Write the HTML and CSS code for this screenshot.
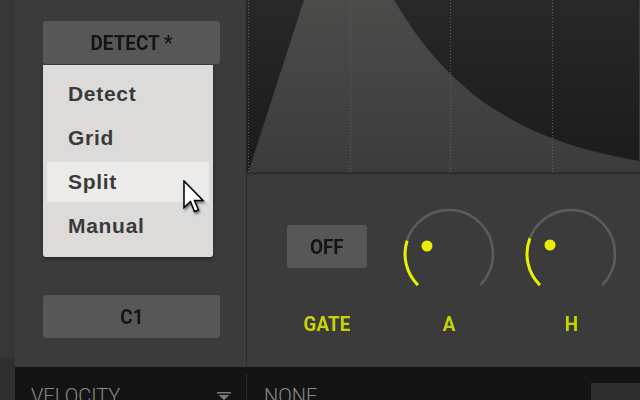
FILE: index.html
```html
<!DOCTYPE html>
<html>
<head>
    <title>Slice Editor</title>
    <link rel="stylesheet" href="styles.css">
</head>
<body>
    <div class="app">
        <div class="strip"></div>
        <div class="main">
            <div class="panel">
                <div class="left-col">
                    <div class="dropdown">
                        <button class="pad-btn"><span>DETECT *</span></button>
                        <ul class="menu">
                            <li>Detect</li>
                            <li>Grid</li>
                            <li class="active">Split</li>
                            <li>Manual</li>
                        </ul>
                    </div>
                    <button class="pad-btn"><span>C1</span></button>
                </div>
                <div class="right-col">
                    <div class="graph">
                        <svg width="392" height="172" viewBox="0 0 392 172">
                            <defs>
                                <linearGradient id="bg" x1="0" y1="0" x2="0" y2="1">
                                    <stop offset="0" stop-color="#282828"/>
                                    <stop offset="1" stop-color="#1b1b1b"/>
                                </linearGradient>
                                <linearGradient id="env" x1="0" y1="0" x2="0" y2="1">
                                    <stop offset="0" stop-color="#4b4b4a"/>
                                    <stop offset="1" stop-color="#3c3c3c"/>
                                </linearGradient>
                            </defs>
                            <rect width="392" height="172" fill="url(#bg)"/>
                            <path d="M2,170 L57,0 L147,0 L157,16 L167,31 L177,44.5 L187,56.4 L197,67.5 L207,77.5 L217,86.5 L227,95 L237,102.5 L247,109 L267,121 L287,131 L307,139 L327,146 L347,151.5 L367,156 L392,161 L392,172 L2,172 Z" fill="url(#env)"/>
                            <g stroke="#5e5e5e" stroke-width="1" stroke-dasharray="1 2">
                                <line x1="1.5" y1="0" x2="1.5" y2="172"/>
                                <line x1="103.5" y1="0" x2="103.5" y2="172"/>
                                <line x1="203.5" y1="0" x2="203.5" y2="172"/>
                                <line x1="305.5" y1="0" x2="305.5" y2="172"/>
                            </g>
                        </svg>
                    </div>
                    <div class="controls">
                        <div class="ctl">
                            <div class="ctl-top"><button class="pad-btn small"><span>OFF</span></button></div>
                            <span class="ctl-label">GATE</span>
                        </div>
                        <div class="ctl">
                            <div class="ctl-top">
                                <svg class="knob" width="100" height="100" viewBox="0 0 100 100">
                                    <path d="M18.9,81.1 A44 44 0 1 1 81.1,81.1" fill="none" stroke="#5c5c5c" stroke-width="2.5"/>
                                    <path d="M18.9,81.1 A44 44 0 0 1 8.1,36.7" fill="none" stroke="#e6f000" stroke-width="3"/>
                                    <circle cx="28" cy="42" r="5.5" fill="#e6f000"/>
                                </svg>
                            </div>
                            <span class="ctl-label">A</span>
                        </div>
                        <div class="ctl">
                            <div class="ctl-top">
                                <svg class="knob" width="100" height="100" viewBox="0 0 100 100">
                                    <path d="M18.9,81.1 A44 44 0 1 1 81.1,81.1" fill="none" stroke="#5c5c5c" stroke-width="2.5"/>
                                    <path d="M18.9,81.1 A44 44 0 0 1 8.9,34.2" fill="none" stroke="#e6f000" stroke-width="3"/>
                                    <circle cx="29" cy="41" r="5.5" fill="#e6f000"/>
                                </svg>
                            </div>
                            <span class="ctl-label">H</span>
                        </div>
                    </div>
                </div>
            </div>
            <div class="bottom">
                <div class="field first">
                    <span>VELOCITY</span>
                    <svg class="caret" width="14" height="8" viewBox="0 0 14 8">
                        <rect x="0" y="0" width="14" height="1.5" fill="#7c7c7c"/>
                        <path d="M1.5,3 L12.5,3 L7,8 Z" fill="#7c7c7c"/>
                    </svg>
                </div>
                <div class="field second">
                    <span>NONE</span>
                </div>
                <div class="corner-box"></div>
            </div>
        </div>
    </div>

    <!-- mouse pointer over the menu -->
    <svg class="pointer" width="24" height="36" viewBox="0 0 24 36">
        <path d="M1,1 L1,27.5 L7.5,21.5 L11.5,31.5 L15.5,30 L11.5,20.5 L20,20.5 Z" fill="#fff" stroke="#000" stroke-width="1.5" stroke-linejoin="miter"/>
    </svg>
</body>
</html>
```

FILE: styles.css
```css
body { margin: 0; background: #141414; overflow: hidden; }
.app { display: flex; width: 640px; height: 400px; }
.strip { width: 15px; background: #363636; border-bottom: 42px solid #2f2f2f; box-sizing: border-box; }
.main { flex: 1; display: flex; flex-direction: column; }
.panel { height: 367px; flex-shrink: 0; display: flex; background: #3b3b3b; background-image: repeating-conic-gradient(#3d3d3d 0 25%, #393939 0 50%); background-size: 2px 2px; }

.left-col { width: 232px; border-right: 1px solid #2c2c2c; padding: 21px 0 0 28px; box-sizing: border-box; display: flex; flex-direction: column; gap: 231px; }
.dropdown { position: relative; }
.pad-btn { display: block; width: 177px; height: 43px; border: 0; border-radius: 3px; background: #575757; color: #141414; font-family: Roboto, "Liberation Sans", sans-serif; font-weight: 700; font-size: 21px; padding: 0; }
.pad-btn span, .ctl-label { display: inline-block; transform: scaleX(0.9); }
.pad-btn.small { width: 80px; margin-top: 21px; }

.menu { position: absolute; left: 0; top: 44px; width: 170px; margin: 0; padding: 9px 4px 11px; box-sizing: border-box; list-style: none; background: #dcdbda; border-radius: 0 0 3px 3px; box-shadow: 0 2px 4px rgba(0,0,0,0.35); }
.menu li { height: 40px; line-height: 40px; margin-bottom: 4px; padding-left: 21px; font-family: "Liberation Sans", Arial, sans-serif; font-weight: 700; font-size: 21px; letter-spacing: 0.7px; color: #3a3a3a; }
.menu li:last-child { margin-bottom: 0; }
.menu li.active { background: #ecebe9; }

.right-col { flex: 1; display: flex; flex-direction: column; }
.graph { height: 172px; border-bottom: 1px solid #2b2b2b; box-shadow: 0 1px 2px rgba(0,0,0,0.3); }
.graph svg { display: block; }
.controls { display: grid; grid-template-columns: 122px 122px 122px; padding: 31px 0 0 19px; }
.ctl { display: flex; flex-direction: column; align-items: center; }
.ctl-top { height: 100px; display: flex; justify-content: center; align-items: flex-start; }
.knob { display: block; }
.ctl-label { margin-top: 8px; font-family: Roboto, "Liberation Sans", sans-serif; font-weight: 700; font-size: 21px; color: #c8d400; }

.bottom { flex: 1; display: flex; background: #141414; position: relative; overflow: hidden; }
.field { display: flex; align-items: flex-start; font-family: Roboto, "Liberation Sans", sans-serif; font-weight: 300; font-size: 20px; color: #8a8a8a; padding-top: 17px; box-sizing: border-box; }
.field.first { width: 232px; padding-left: 16px; border-right: 1px solid #2a2a2a; margin-top: 7px; padding-top: 10px; }
.field.first span { flex: 1; }
.caret { margin: 8px 15px 0 0; }
.field.second { padding-left: 17px; }
.corner-box { position: absolute; right: 0; bottom: 0; width: 49px; height: 17px; background: #2e2e2e; }

.pointer { position: absolute; left: 183px; top: 180px; filter: drop-shadow(1px 2px 1px rgba(0,0,0,0.5)); }
```
